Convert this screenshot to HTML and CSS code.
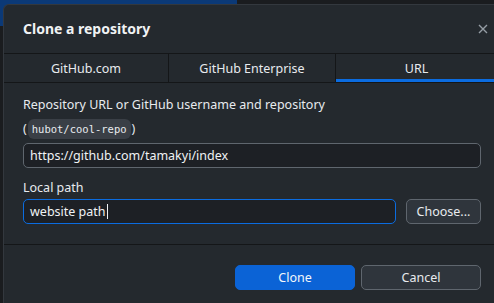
FILE: index.html
```html
<!DOCTYPE html>
<html lang="en">
<head>
    <meta charset="UTF-8">
    <title>Clone a repository</title>
    <link rel="stylesheet" href="styles.css">
</head>
<body>
    <div class="backdrop-accent"></div>
    <div class="dialog">
        <div class="dialog-header">
            <h1>Clone a repository</h1>
            <svg class="close" width="10" height="10" viewBox="0 0 10 10">
                <path d="M1 1 L9 9 M9 1 L1 9" stroke="#959da5" stroke-width="1.4"/>
            </svg>
        </div>
        <div class="tabs">
            <div class="tab">GitHub.com</div>
            <div class="tab">GitHub Enterprise</div>
            <div class="tab active">URL</div>
        </div>
        <div class="dialog-body">
            <label class="field-label">Repository URL or GitHub username and repository</label>
            <div class="hint">(<code>hubot/cool-repo</code>)</div>
            <div class="text-input">https://github.com/tamakyi/index</div>

            <label class="field-label second">Local path</label>
            <div class="path-row">
                <div class="text-input focused">website path<span class="caret"></span></div>
                <button class="btn">Choose...</button>
            </div>
        </div>
        <div class="dialog-footer">
            <button class="btn primary">Clone</button>
            <button class="btn">Cancel</button>
        </div>
    </div>
</body>
</html>
```

FILE: styles.css
```css
body {
    margin: 0;
    width: 494px;
    height: 303px;
    overflow: hidden;
    background-color: #1a1c1f;
    font-family: 'Noto Sans', 'Open Sans', sans-serif;
    color: #e1e4e8;
    position: relative;
}

.backdrop-accent {
    position: absolute;
    left: 0;
    top: 0;
    width: 237px;
    height: 26px;
    background-color: #0b3977;
}

.dialog {
    position: relative;
    margin: 4px 0 0 3px;
    width: 494px;
    height: 300px;
    background-color: #24292e;
    border-top: 1px solid #33383e;
    border-left: 1px solid #33383e;
    border-radius: 6px 0 0 0;
    box-sizing: border-box;
}

.dialog-header {
    display: flex;
    align-items: center;
    justify-content: space-between;
    height: 48px;
    padding: 0 9px 0 19px;
    border-bottom: 1px solid #141618;
}

.dialog-header h1 {
    margin: 0 0 1px 0;
    font-size: 14px;
    font-weight: bold;
    color: #f0f2f4;
}

.tabs {
    display: grid;
    grid-template-columns: 165px 167px 1fr;
    height: 28px;
    border-bottom: 1px solid #141618;
}

.tab {
    display: flex;
    align-items: center;
    justify-content: center;
    font-size: 12.5px;
    color: #e8ebee;
    border-right: 1px solid #141618;
    box-sizing: border-box;
}

.tab.active {
    border-right: none;
    border-bottom: 3px solid #0b6ce0;
    padding-top: 3px;
}

.dialog-body {
    box-sizing: border-box;
    padding: 13px 16px 0 19px;
    height: 162px;
    border-bottom: 1px solid #141618;
}

.field-label {
    display: block;
    font-size: 12.5px;
    line-height: 17px;
    color: #e8ebee;
}

.field-label.second {
    margin-top: 11px;
}

.hint {
    font-size: 12.5px;
    line-height: 22px;
    margin: 5px 0 3px 0;
    color: #e8ebee;
}

.hint code {
    font-family: 'DejaVu Sans Mono', monospace;
    font-size: 10.5px;
    background-color: #3a3f46;
    border-radius: 6px;
    padding: 4px 4px;
    margin: 0 1px;
}

.text-input {
    height: 25px;
    box-sizing: border-box;
    padding: 0 6px;
    display: flex;
    align-items: center;
    font-size: 12.5px;
    color: #f0f2f4;
    background-color: #1d2025;
    border: 1px solid #5f666e;
    border-radius: 5px;
    flex-grow: 1;
}

.text-input.focused {
    border-color: #0b6ce0;
}

.caret {
    display: inline-block;
    width: 1px;
    height: 15px;
    background-color: #f0f2f4;
    margin-left: 1px;
}

.path-row {
    display: flex;
    gap: 10px;
    margin-top: 3px;
}

.btn {
    font-family: 'Noto Sans', 'Open Sans', sans-serif;
    font-size: 12.5px;
    color: #e8ebee;
    background-color: #2f353c;
    border: 1px solid #5f666e;
    border-radius: 5px;
    height: 25px;
    padding: 0;
    width: 75px;
}

.dialog-footer {
    display: flex;
    justify-content: flex-end;
    gap: 6px;
    padding: 20px 16px 0 0;
}

.dialog-footer .btn {
    width: 120px;
}

.btn.primary {
    background-color: #0b63d6;
    border-color: #0b63d6;
    color: #f4f7fa;
}
```
